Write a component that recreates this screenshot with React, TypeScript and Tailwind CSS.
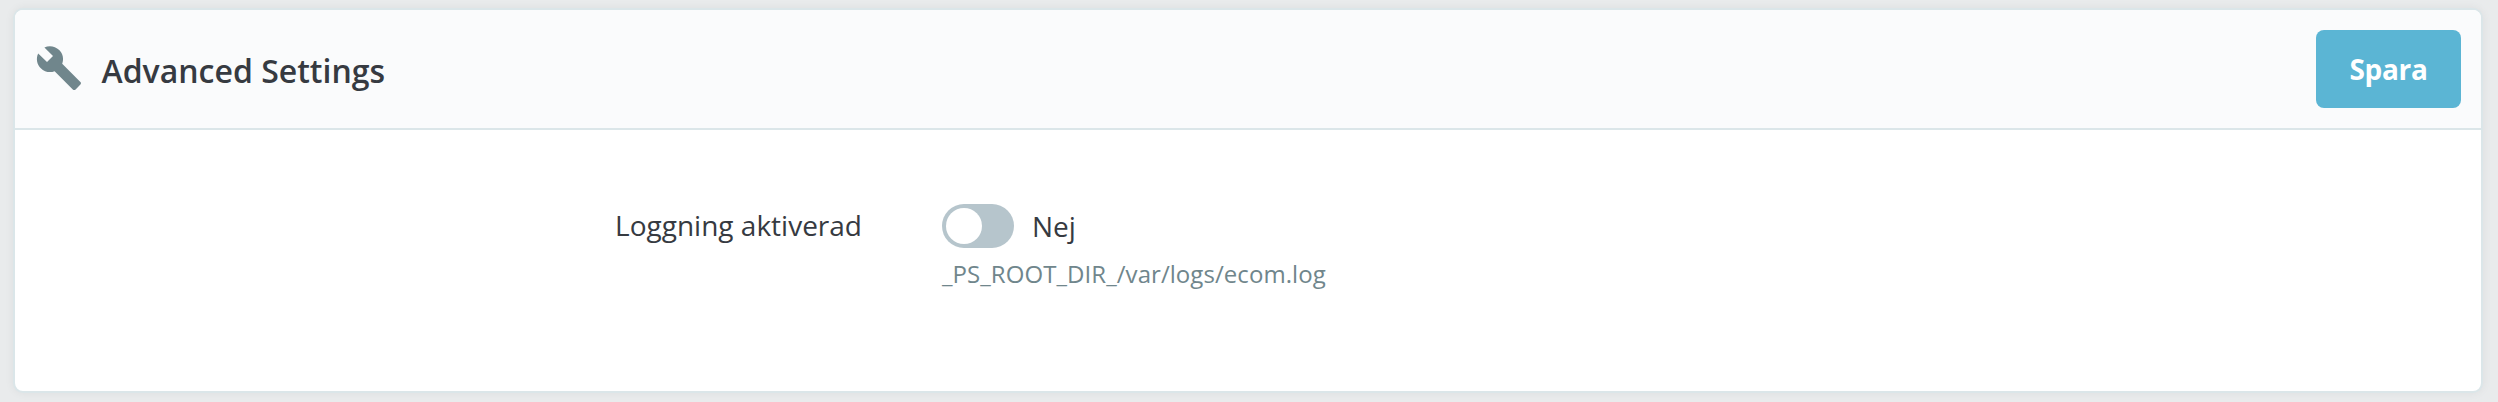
import { MdBuild } from "react-icons/md";

export default function App() {
  return (
    <div className="h-[402px] w-[2498px] bg-[#e9ebec] pt-[8px] pl-[13px] font-['Open_Sans',sans-serif] text-[#363a41]">
      <section className="flex h-[385px] w-[2470px] flex-col overflow-hidden rounded-[10px] border-2 border-[#dbe6e9] bg-white shadow-[0_0_10px_rgba(0,0,0,0.06)]">
        <header className="flex h-[120px] shrink-0 items-center border-b-2 border-[#dbe6e9] bg-[#fafbfc] px-5">
          <MdBuild className="mr-[18.5px] mb-[2px] size-12 text-[#70868c]" />
          <h1 className="pt-[4px] text-[32px] font-semibold">Advanced Settings</h1>
          <button className="ml-auto h-[78px] w-[145px] rounded-lg bg-[#5bb5d4] text-[28px] font-bold tracking-[-0.3px] text-white">Spara</button>
        </header>
        <div className="flex pt-[74px]">
          <label className="w-[847px] text-right text-[28px] leading-[42px]">Loggning aktiverad</label>
          <div className="ml-[80px]">
            <div className="flex items-center gap-[18px]">
              <span className="flex h-[44px] w-[72px] items-center rounded-full bg-[#b6c5cc] p-[4px]">
                <span className="size-9 rounded-full bg-white" />
              </span>
              <span className="text-[28px] leading-[44px]">Nej</span>
            </div>
            <p className="mt-[8px] text-[24px] leading-[36px] tracking-[0.06px] text-[#70868c]">_PS_ROOT_DIR_/var/logs/ecom.log</p>
          </div>
        </div>
      </section>
    </div>
  );
}
